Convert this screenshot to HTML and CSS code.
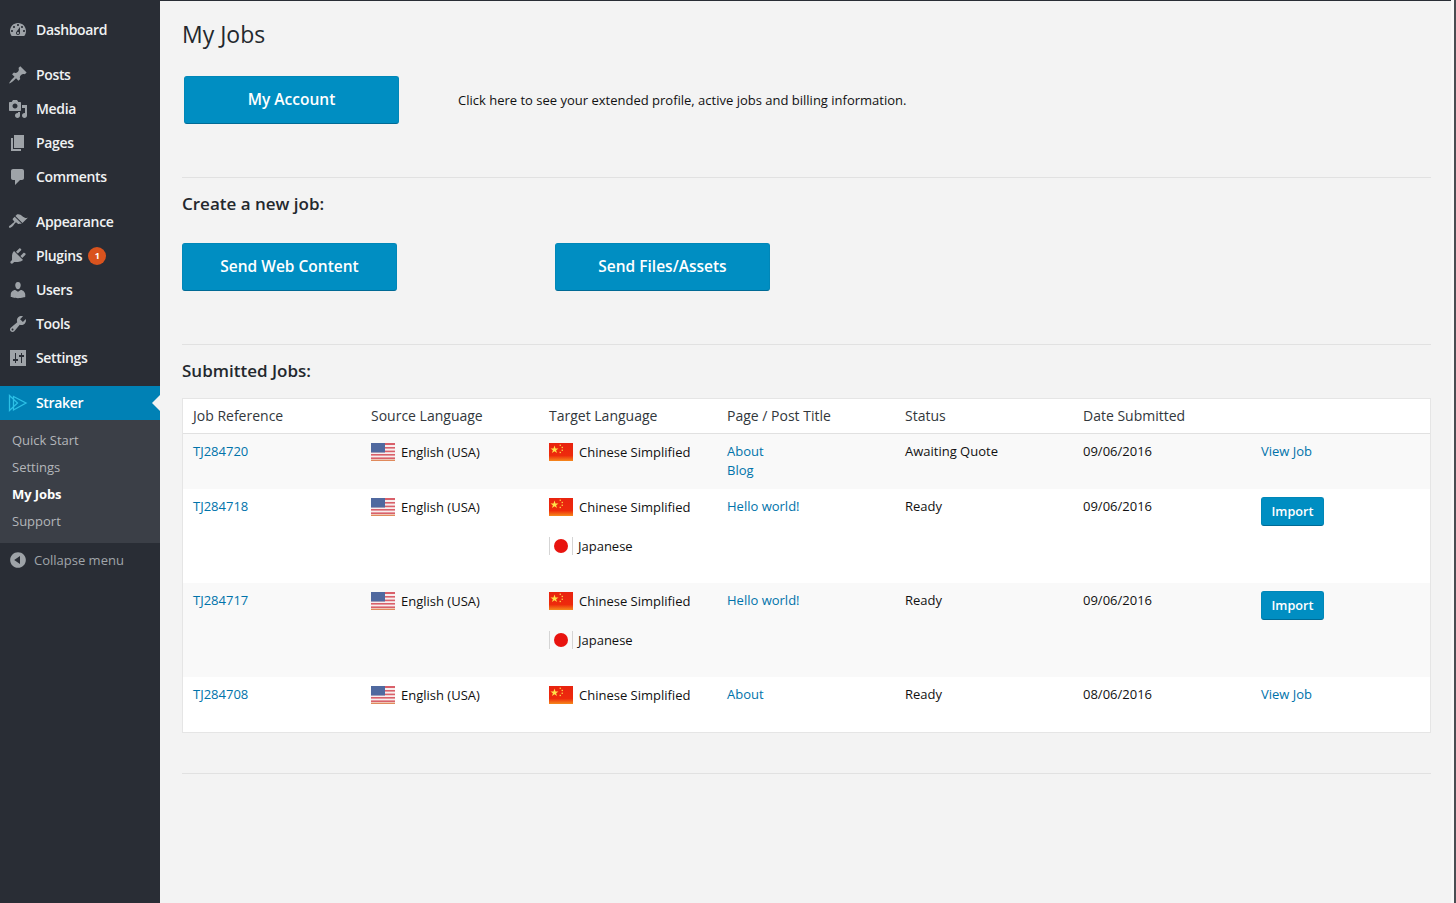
FILE: index.html
```html
<!DOCTYPE html>
<html lang="en">
<head>
    <meta charset="UTF-8">
    <meta name="viewport" content="width=device-width, initial-scale=1.0">
    <title>My Jobs</title>
    <link rel="stylesheet" href="styles.css">
</head>
<body>
    <svg class="defs" width="0" height="0">
        <defs>
            <linearGradient id="cnred" x1="0" y1="0" x2="0" y2="1">
                <stop offset="0" stop-color="#e8230f"/>
                <stop offset="0.7" stop-color="#ee2a0c"/>
                <stop offset="1" stop-color="#f58a1c"/>
            </linearGradient>
            <symbol id="flag-us" viewBox="0 0 24 18">
                <rect width="24" height="18" fill="#f7eeee"/>
                <rect y="0" width="24" height="2" fill="#d9606a"/>
                <rect y="4" width="24" height="1.6" fill="#d9606a"/>
                <rect y="7.6" width="24" height="1.6" fill="#d9606a"/>
                <rect y="11" width="24" height="1.6" fill="#d9606a"/>
                <rect y="14.4" width="24" height="1.6" fill="#d9606a"/>
                <rect y="16.6" width="24" height="1.4" fill="#e08a5c"/>
                <rect width="14" height="9.5" fill="#50699f"/>
            </symbol>
            <symbol id="flag-cn" viewBox="0 0 24 18">
                <rect width="24" height="18" fill="url(#cnred)"/>
                <polygon points="5.5,2.500 6.500,5.400 9.500,5.400 7.100,7.200 8,10 5.500,8.300 3,10 3.900,7.200 1.500,5.400 4.500,5.400" fill="#ffe34a"/>
                <rect x="10.600" y="1.600" width="1.300" height="1.300" fill="#ffd94a"/>
                <rect x="12.600" y="3.800" width="1.300" height="1.300" fill="#ffd94a"/>
                <rect x="12.600" y="6.600" width="1.300" height="1.300" fill="#ffd94a"/>
                <rect x="10.600" y="8.800" width="1.300" height="1.300" fill="#ffd94a"/>
            </symbol>
            <symbol id="flag-jp" viewBox="0 0 24 18">
                <rect x="0" width="1" height="18" fill="#d5d5d5"/>
                <rect x="23" width="1" height="18" fill="#d5d5d5"/>
                <circle cx="12" cy="9" r="7" fill="#e8140f"/>
            </symbol>
        </defs>
    </svg>

    <nav class="sidebar">
        <ul class="menu">
            <li class="menu-item">
                <svg class="icon" viewBox="0 0 20 20"><path fill-rule="evenodd" d="M3.76 16h12.48c1.1-1.37 1.76-3.11 1.76-5 0-4.42-3.58-8-8-8s-8 3.58-8 8c0 1.89.66 3.63 1.76 5zM10 4c.55 0 1 .45 1 1s-.45 1-1 1-1-.45-1-1 .45-1 1-1zM6 6c.55 0 1 .45 1 1s-.45 1-1 1-1-.45-1-1 .45-1 1-1zm8 0c.55 0 1 .45 1 1s-.45 1-1 1-1-.45-1-1 .45-1 1-1zm-5.37 5.55L12 7v6c0 1.1-.9 2-2 2s-2-.9-2-2c0-.57.24-1.08.63-1.45zM4 10c.55 0 1 .45 1 1s-.45 1-1 1-1-.45-1-1 .45-1 1-1zm12 0c.55 0 1 .45 1 1s-.45 1-1 1-1-.45-1-1 .45-1 1-1zm-5 3c0-.55-.45-1-1-1s-1 .45-1 1 .45 1 1 1 1-.45 1-1z"/></svg>
                Dashboard
            </li>
            <li class="menu-item gap">
                <svg class="icon" viewBox="0 0 20 20"><path d="M10.44 3.02l1.82-1.82 6.36 6.35-1.83 1.82c-1.05-.68-2.48-.57-3.41.36l-.75.75c-.92.93-1.04 2.35-.35 3.41l-1.83 1.82-2.41-2.41-2.8 2.79c-.42.42-3.38 2.71-3.8 2.29s1.86-3.39 2.28-3.81l2.79-2.79L4.1 9.36l1.83-1.82c1.05.69 2.48.57 3.4-.36l.75-.75c.93-.92 1.05-2.35.36-3.41z"/></svg>
                Posts
            </li>
            <li class="menu-item">
                <svg class="icon" viewBox="0 0 20 20"><path fill-rule="evenodd" d="M13 11V4c0-.55-.45-1-1-1h-1.67L9 1H5L3.67 3H2c-.55 0-1 .45-1 1v7c0 .55.45 1 1 1h10c.55 0 1-.45 1-1zM7 4.5c1.38 0 2.5 1.12 2.5 2.5S8.38 9.5 7 9.5 4.5 8.38 4.5 7 5.62 4.5 7 4.5zM14 6h5v10.5c0 1.38-1.12 2.5-2.5 2.5S14 17.88 14 16.5s1.12-2.5 2.5-2.5c.17 0 .34.02.5.05V9h-3V6zm-4 8.05V13h2v3.5c0 1.38-1.12 2.5-2.5 2.5S7 17.88 7 16.5 8.12 14 9.5 14c.17 0 .34.02.5.05z"/></svg>
                Media
            </li>
            <li class="menu-item">
                <svg class="icon" viewBox="0 0 20 20"><path d="M6 15V2h10v13H6zm-1 1h8v2H3V5h2v11z"/></svg>
                Pages
            </li>
            <li class="menu-item">
                <svg class="icon" viewBox="0 0 20 20"><path d="M5 2h9c1.1 0 2 .9 2 2v7c0 1.1-.9 2-2 2h-2l-5 5v-5H5c-1.1 0-2-.9-2-2V4c0-1.1.9-2 2-2z"/></svg>
                Comments
            </li>
            <li class="menu-item gap">
                <svg class="icon" viewBox="0 0 20 20"><path d="M14.48 11.06L7.41 3.99l1.5-1.5c.5-.56 2.3-.47 3.51.32 1.21.8 1.43 1.28 2.91 2.1 1.18.64 2.45 1.26 4.45.85zm-.71.71L6.7 4.7 4.93 6.47c-.39.39-.39 1.02 0 1.41l1.06 1.06c.39.39.39 1.03 0 1.42-.6.6-1.43 1.11-2.21 1.69-.35.26-.7.53-1.01.84C1.43 13.23.4 14.91 1.1 15.6c.7.7 2.39-.33 3.72-1.66.31-.31.58-.66.85-1.02.57-.78 1.08-1.61 1.69-2.21.39-.39 1.02-.39 1.41 0l1.06 1.06c.39.39 1.02.39 1.41 0z"/></svg>
                Appearance
            </li>
            <li class="menu-item">
                <svg class="icon" viewBox="0 0 20 20"><path d="M13.11 4.36L9.87 7.6 8 5.73l3.24-3.24c.35-.34 1.05-.2 1.56.32.52.51.66 1.21.31 1.55zm-8 1.77l.91-1.12 9.01 9.01-1.19.84c-.71.71-2.63 1.16-3.82 1.16H6.14L4.9 17.26c-.59.59-1.54.59-2.12 0-.59-.58-.59-1.53 0-2.12l1.24-1.24v-3.88c0-1.13.4-3.19 1.09-3.89zm7.26 3.97l3.24-3.24c.34-.35 1.04-.21 1.55.31.52.51.66 1.21.31 1.55l-3.24 3.25z"/></svg>
                Plugins <span class="badge">1</span>
            </li>
            <li class="menu-item">
                <svg class="icon" viewBox="0 0 20 20"><path d="M10 9.25c-2.27 0-2.73-3.44-2.73-3.44C7 4.02 7.82 2 9.97 2c2.16 0 2.98 2.02 2.71 3.81 0 0-.41 3.44-2.68 3.44zm0 2.57L12.72 10c2.39 0 4.52 2.33 4.52 4.53v2.49s-3.65 1.13-7.24 1.13c-3.65 0-7.24-1.13-7.24-1.13v-2.49c0-2.25 1.94-4.48 4.47-4.48z"/></svg>
                Users
            </li>
            <li class="menu-item">
                <svg class="icon" viewBox="0 0 20 20"><path fill-rule="evenodd" d="M16.68 9.77c-1.34 1.34-3.3 1.67-4.95.99l-5.41 6.52c-.99.99-2.59.99-3.58 0s-.99-2.59 0-3.57l6.52-5.42c-.68-1.65-.35-3.61.99-4.95 1.28-1.28 3.12-1.62 4.72-1.06l-2.89 2.89 2.82 2.82 2.86-2.87c.53 1.58.18 3.39-1.08 4.65zM3.81 16.21c.4.39 1.04.39 1.43 0 .4-.4.4-1.04 0-1.43-.39-.4-1.03-.4-1.43 0-.39.39-.39 1.03 0 1.43z"/></svg>
                Tools
            </li>
            <li class="menu-item">
                <svg class="icon" viewBox="0 0 20 20"><path fill-rule="evenodd" d="M18 18V2H2v16zM8 11h2v2H8v2H7v-2H5v-2h2V5h1zm5-2h-2V7h2V5h1v2h2v2h-2v6h-1z"/></svg>
                Settings
            </li>
            <li class="menu-item gap current">
                <svg class="icon straker" viewBox="0 0 20 20"><path d="M1.500 2.500v15l8-7.500zM5.500 3.500l12.500 6.500-12.500 7z"/></svg>
                Straker
            </li>
        </ul>
        <ul class="submenu">
            <li>Quick Start</li>
            <li>Settings</li>
            <li class="active">My Jobs</li>
            <li>Support</li>
        </ul>
        <div class="collapse">
            <svg class="icon" viewBox="0 0 20 20"><path fill-rule="evenodd" d="M10 2.160c4.330 0 7.840 3.510 7.840 7.840s-3.510 7.840-7.840 7.840S2.160 14.330 2.160 10 5.710 2.160 10 2.160zm2 11.720V6.120L6.180 9.970z"/></svg>
            Collapse menu
        </div>
    </nav>

    <main class="content">
        <h1>My Jobs</h1>
        <div class="account-row">
            <a class="big-btn">My Account</a>
            <p>Click here to see your extended profile, active jobs and billing information.</p>
        </div>
        <hr>
        <h2>Create a new job:</h2>
        <div class="send-row">
            <a class="big-btn">Send Web Content</a>
            <a class="big-btn">Send Files/Assets</a>
        </div>
        <hr>
        <h2>Submitted Jobs:</h2>
        <table class="jobs">
            <thead>
                <tr>
                    <th>Job Reference</th>
                    <th>Source Language</th>
                    <th>Target Language</th>
                    <th>Page / Post Title</th>
                    <th>Status</th>
                    <th>Date Submitted</th>
                    <th></th>
                </tr>
            </thead>
            <tbody>
                <tr>
                    <td><a>TJ284720</a></td>
                    <td><div class="lang"><svg class="flag"><use href="#flag-us"/></svg>English (USA)</div></td>
                    <td><div class="lang"><svg class="flag"><use href="#flag-cn"/></svg>Chinese Simplified</div></td>
                    <td><a>About</a><br><a>Blog</a></td>
                    <td>Awaiting Quote</td>
                    <td>09/06/2016</td>
                    <td><a>View Job</a></td>
                </tr>
                <tr>
                    <td><a>TJ284718</a></td>
                    <td><div class="lang"><svg class="flag"><use href="#flag-us"/></svg>English (USA)</div></td>
                    <td>
                        <div class="lang"><svg class="flag"><use href="#flag-cn"/></svg>Chinese Simplified</div>
                        <div class="lang jp"><svg class="flag"><use href="#flag-jp"/></svg>Japanese</div>
                    </td>
                    <td><a>Hello world!</a></td>
                    <td>Ready</td>
                    <td>09/06/2016</td>
                    <td><button class="import">Import</button></td>
                </tr>
                <tr>
                    <td><a>TJ284717</a></td>
                    <td><div class="lang"><svg class="flag"><use href="#flag-us"/></svg>English (USA)</div></td>
                    <td>
                        <div class="lang"><svg class="flag"><use href="#flag-cn"/></svg>Chinese Simplified</div>
                        <div class="lang jp"><svg class="flag"><use href="#flag-jp"/></svg>Japanese</div>
                    </td>
                    <td><a>Hello world!</a></td>
                    <td>Ready</td>
                    <td>09/06/2016</td>
                    <td><button class="import">Import</button></td>
                </tr>
                <tr>
                    <td><a>TJ284708</a></td>
                    <td><div class="lang"><svg class="flag"><use href="#flag-us"/></svg>English (USA)</div></td>
                    <td><div class="lang"><svg class="flag"><use href="#flag-cn"/></svg>Chinese Simplified</div></td>
                    <td><a>About</a></td>
                    <td>Ready</td>
                    <td>08/06/2016</td>
                    <td><a>View Job</a></td>
                </tr>
            </tbody>
        </table>
        <hr class="last">
    </main>
    <div class="edge"></div>
</body>
</html>
```
FILE: styles.css
```css
* {
    box-sizing: border-box;
}
html, body {
    height: 100%;
}
body {
    margin: 0;
    display: flex;
    font-family: "Open Sans", sans-serif;
    font-size: 13px;
    color: #222;
    background-color: #f3f3f3;
    overflow: hidden;
}
.defs {
    position: absolute;
}
ul {
    list-style: none;
    margin: 0;
    padding: 0;
}

/* sidebar */
.sidebar {
    flex: 0 0 160px;
    min-height: 903px;
    padding-top: 13px;
    background-color: #292d35;
    color: #f0f2f3;
}
.menu-item {
    position: relative;
    display: flex;
    align-items: center;
    gap: 8px;
    height: 34px;
    padding: 0 0 2px 8px;
    font-size: 14px;
    font-weight: 600;
    letter-spacing: -0.35px;
}
.menu-item.gap {
    margin-top: 11px;
}
.icon {
    flex: none;
    width: 20px;
    height: 20px;
    fill: #9ea3a8;
}
.menu-item .icon {
    margin-top: 2px;
}
.badge {
    width: 18px;
    height: 18px;
    margin: 2px 0 0 -2px;
    border-radius: 50%;
    background-color: #d9531e;
    color: #fff;
    font-size: 9px;
    font-weight: 700;
    line-height: 18px;
    text-align: center;
    letter-spacing: 0;
}
.current {
    background-color: #0081b5;
    color: #fff;
}
.current::after {
    content: "";
    position: absolute;
    right: 0;
    top: 9px;
    border: 8px solid transparent;
    border-right-color: #f3f3f3;
    border-left-width: 0;
}
.icon.straker {
    fill: none;
    stroke: #2cc0e6;
    stroke-width: 1.3;
}
.submenu {
    height: 123px;
    padding-top: 7px;
    background-color: #3b3f47;
    color: #b3b6ba;
}
.submenu li {
    height: 27px;
    padding-left: 12px;
    font-size: 13px;
    font-weight: 500;
    line-height: 26px;
}
.submenu .active {
    color: #fff;
    font-weight: 700;
    letter-spacing: -0.1px;
}
.collapse {
    display: flex;
    align-items: center;
    gap: 6px;
    height: 34px;
    padding-left: 8px;
    color: #a0a5aa;
    font-size: 13px;
    font-weight: 500;
}

/* main column */
.content {
    flex: 1;
    min-width: 0;
    padding: 17px 20px 0 22px;
    border-top: 1px solid #292d35;
}
.edge {
    flex: 0 0 5px;
    background-color: #f8f8f8;
    border-right: 2px solid #4a4d52;
}
h1 {
    margin: 0 0 26px;
    font-size: 23px;
    font-weight: 400;
    line-height: 32px;
    color: #23282d;
}
h2 {
    margin: 14px 0 0;
    font-size: 17px;
    font-weight: 600;
    line-height: 24px;
    color: #23282d;
}
hr {
    height: 1px;
    margin: 53px 0 0;
    border: 0;
    background-color: #e1e1e1;
}
hr.last {
    margin-top: 40px;
}
.account-row {
    display: flex;
    align-items: center;
    gap: 59px;
    margin-left: 2px;
}
.account-row p {
    margin: 0;
    font-size: 13px;
    color: #111;
}
.send-row {
    display: flex;
    gap: 158px;
    margin-top: 27px;
}
.big-btn {
    width: 215px;
    height: 48px;
    border: 1px solid #0087b8;
    border-bottom-color: #006a95;
    border-radius: 3px;
    background-color: #008ec2;
    color: #fff;
    font-size: 15.5px;
    font-weight: 600;
    line-height: 44px;
    text-align: center;
}

/* jobs table */
.jobs {
    width: 100%;
    margin-top: 15px;
    table-layout: fixed;
    border-spacing: 0;
    border: 1px solid #e5e5e5;
    background-color: #fff;
}
.jobs th {
    width: 178px;
    height: 35px;
    padding: 0 10px 2px;
    border-bottom: 1px solid #e1e1e1;
    font-size: 14px;
    font-weight: 400;
    color: #32373c;
    text-align: left;
}
.jobs th:last-child {
    width: auto;
}
.jobs td {
    padding: 8px 10px 7px;
    line-height: 19px;
    vertical-align: top;
    color: #111;
}
.jobs tbody tr:nth-child(odd) {
    background-color: #f9f9f9;
}
.jobs a {
    color: #0073aa;
}
.lang {
    display: flex;
    align-items: center;
    gap: 6px;
    height: 18px;
    margin: 1px 0 21px;
    white-space: nowrap;
}
.lang.jp {
    gap: 5px;
}
.flag {
    flex: none;
    width: 24px;
    height: 18px;
}
.import {
    display: block;
    width: 63px;
    height: 29px;
    padding: 0 0 2px;
    border: 1px solid #0087b8;
    border-bottom-color: #006a95;
    border-radius: 3px;
    background-color: #008ec2;
    color: #fff;
    font-family: inherit;
    font-size: 12.7px;
    font-weight: 600;
}
```
